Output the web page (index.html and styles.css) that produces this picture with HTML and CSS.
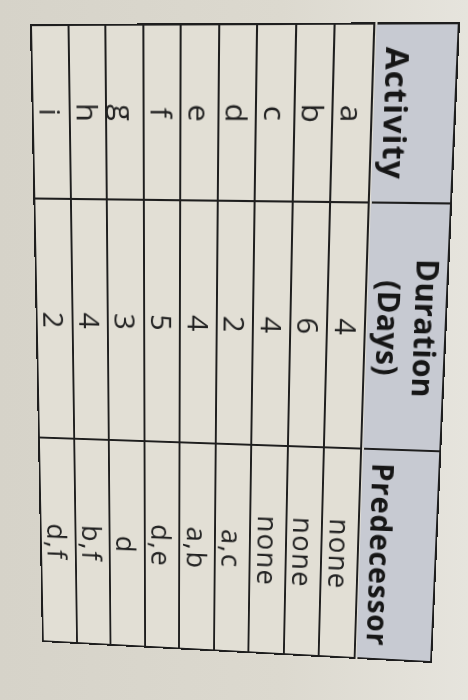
FILE: index.html
```html
<!DOCTYPE html>
<html lang="en">
<head>
<meta charset="utf-8">
<title>Activity table</title>
<link rel="stylesheet" href="styles.css">
</head>
<body>
<div class="sheet">
  <div class="head">
    <div class="hcell">Activity</div>
    <div class="hcell hcell-tight">Duration<br>(Days)</div>
    <div class="hcell">Predecessor</div>
  </div>
  <div class="grid">
    <div class="cell">a</div><div class="cell">4</div><div class="cell">none</div>
    <div class="cell">b</div><div class="cell">6</div><div class="cell">none</div>
    <div class="cell">c</div><div class="cell">4</div><div class="cell">none</div>
    <div class="cell">d</div><div class="cell">2</div><div class="cell">a,c</div>
    <div class="cell">e</div><div class="cell">4</div><div class="cell">a,b</div>
    <div class="cell">f</div><div class="cell">5</div><div class="cell">d,e</div>
    <div class="cell">g</div><div class="cell">3</div><div class="cell">d</div>
    <div class="cell">h</div><div class="cell">4</div><div class="cell">b,f</div>
    <div class="cell">i</div><div class="cell">2</div><div class="cell">d,f</div>
  </div>
</div>
</body>
</html>
```

FILE: styles.css
```css
html, body {
  margin: 0;
  padding: 0;
  width: 468px;
  height: 700px;
  overflow: hidden;
}

body {
  background: linear-gradient(90deg, #d6d3c9 0%, #dcd9cf 60%, #e6e4dd 100%);
  font-family: "Open Sans", "DejaVu Sans", sans-serif;
  color: #222222;
}

/* The table runs sideways (vertical writing mode) and is then
   projected onto the photographed quadrilateral. */
.sheet {
  writing-mode: vertical-rl;
  width: 420px;
  height: 630px;
  display: flex;
  flex-direction: column;
  gap: 2px;
  transform-origin: 0 0;
  transform: matrix3d(1.020900, -0.0070902, 0, -0.00009701,
                      0.026745, 1.126716, 0, 0.00016479,
                      0, 0, 1, 0,
                      31.222, 24.978, 0, 1.040745);
}

.head,
.grid {
  display: grid;
  grid-template-columns: 163px 240px 1fr;
  gap: 2px;
  border: 2px solid #1e1e1e;
  background: #1e1e1e;
}

.head {
  block-size: 74px;
  flex: none;
}

.hcell {
  background: #c7cad2;
  display: flex;
  flex-direction: column;
  justify-content: flex-end;
  align-items: center;
  text-align: center;
  font-weight: 700;
  font-size: 30px;
  letter-spacing: 1px;
  line-height: 37px;
  padding-block-end: 3px;
  color: #161616;
}

.hcell-tight {
  letter-spacing: 0.2px;
}

.grid {
  flex: 1;
  grid-template-rows: repeat(9, 1fr);
}

.cell {
  background: #e2dfd5;
  display: flex;
  align-items: center;
  justify-content: center;
  font-size: 29px;
  letter-spacing: 1.5px;
  line-height: 1;
}
```
